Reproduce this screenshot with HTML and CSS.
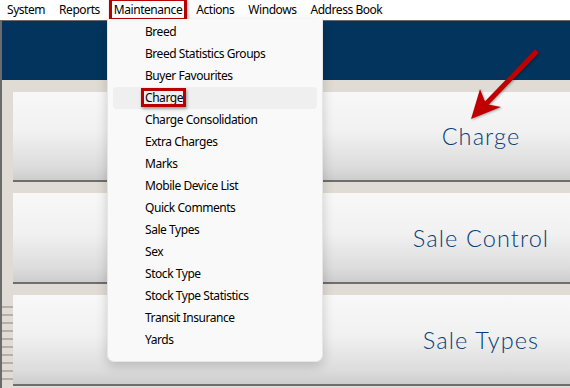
FILE: index.html
```html
<!DOCTYPE html>
<html lang="en">
<head>
    <meta charset="UTF-8">
    <meta name="viewport" content="width=device-width, initial-scale=1.0">
    <title>Maintenance</title>
    <link rel="stylesheet" href="styles.css">
</head>
<body>
    <div class="menubar">
        <span class="menu-item">System</span>
        <span class="menu-item">Reports</span>
        <span class="menu-item marked">Maintenance</span>
        <span class="menu-item">Actions</span>
        <span class="menu-item">Windows</span>
        <span class="menu-item">Address Book</span>
    </div>

    <div class="window">
        <div class="header"></div>
        <div class="panel">
            <div class="row">
                <div class="grip"></div>
                <div class="tile">Charge</div>
            </div>
            <div class="row">
                <div class="grip"></div>
                <div class="tile">Sale Control</div>
            </div>
            <div class="row">
                <div class="grip striped"></div>
                <div class="tile">Sale Types</div>
            </div>
        </div>
    </div>

    <!-- Maintenance dropdown -->
    <ul class="dropdown">
        <li>Breed</li>
        <li>Breed Statistics Groups</li>
        <li>Buyer Favourites</li>
        <li class="hover"><span class="marked">Charge</span></li>
        <li>Charge Consolidation</li>
        <li>Extra Charges</li>
        <li>Marks</li>
        <li>Mobile Device List</li>
        <li>Quick Comments</li>
        <li>Sale Types</li>
        <li>Sex</li>
        <li>Stock Type</li>
        <li>Stock Type Statistics</li>
        <li>Transit Insurance</li>
        <li>Yards</li>
    </ul>

    <svg class="arrow" width="570" height="388" viewBox="0 0 570 388">
        <line x1="537" y1="51" x2="484" y2="106" stroke="#c00000" stroke-width="5" />
        <polygon points="471,119 480,89 486,104 501,107" fill="#c00000" />
    </svg>
</body>
</html>
```

FILE: styles.css
```css
* {
    margin: 0;
    padding: 0;
    box-sizing: border-box;
}

body {
    width: 570px;
    height: 388px;
    overflow: hidden;
    background: #ffffff;
    font-family: "Noto Sans", "Open Sans", sans-serif;
    font-size: 12px;
    letter-spacing: -0.45px;
    color: #000;
    position: relative;
}

.menubar {
    display: flex;
    height: 20px;
    background: #ffffff;
    align-items: center;
}

.menu-item {
    padding: 0 7px;
    line-height: 20px;
    white-space: nowrap;
    position: relative;
}

.marked {
    position: relative;
}

.marked::after {
    content: "";
    position: absolute;
    left: -4px;
    right: -3px;
    top: -1px;
    bottom: -1px;
    border: 3px solid #b80000;
    box-shadow: 1px 2px 3px rgba(0, 0, 0, 0.35);
}

.menu-item.marked::after {
    left: 2px;
    right: 2px;
    top: -2px;
    bottom: -1px;
}

.window {
    border-top: 1px solid #6b6b6b;
    border-left: 2px solid #6b6b6b;
    height: 368px;
    overflow: hidden;
    background: #e0dcd5;
    display: flex;
    flex-direction: column;
}

.header {
    flex: none;
    height: 59px;
    background: #02345d;
}

.panel {
    flex: 1;
    padding-top: 12px;
}

.row {
    display: flex;
    margin-bottom: 11px;
}

.grip {
    width: 11px;
    flex: none;
}

.grip.striped {
    margin-top: 6px;
    background: repeating-linear-gradient(to bottom, #e0dcd5 0, #e0dcd5 5px, #b5b1a7 5px, #b5b1a7 7px, #e0dcd5 7px, #e0dcd5 8px);
}

.tile {
    width: 936px;
    flex: none;
    height: 91px;
    display: flex;
    align-items: center;
    justify-content: center;
    background: linear-gradient(to bottom, #f8f8f8 0%, #f1f1f1 45%, #dcdcdc 85%, #cdcdcd 100%);
    border-bottom: 2px solid #6e6e6e;
    font-family: "Lato", "DejaVu Sans", sans-serif;
    font-weight: 300;
    font-size: 23.5px;
    letter-spacing: 1.1px;
    color: #063f7c;
}

.row:first-child .tile {
    height: 90px;
}

.dropdown {
    position: absolute;
    left: 107px;
    top: 19px;
    width: 216px;
    padding: 2px 5px 10px;
    list-style: none;
    background: #f9f9f9;
    border: 1px solid #e6e6e6;
    border-top: none;
    border-radius: 0 0 7px 7px;
    box-shadow: 0 4px 12px rgba(0, 0, 0, 0.18);
}

.dropdown li {
    height: 22px;
    line-height: 22px;
    padding-left: 32px;
    border-radius: 4px;
    white-space: nowrap;
}

.dropdown li.hover {
    background: #efefef;
}

.arrow {
    position: absolute;
    left: 0;
    top: 0;
    pointer-events: none;
    filter: drop-shadow(1px 1px 1px rgba(0, 0, 0, 0.3));
}
```
